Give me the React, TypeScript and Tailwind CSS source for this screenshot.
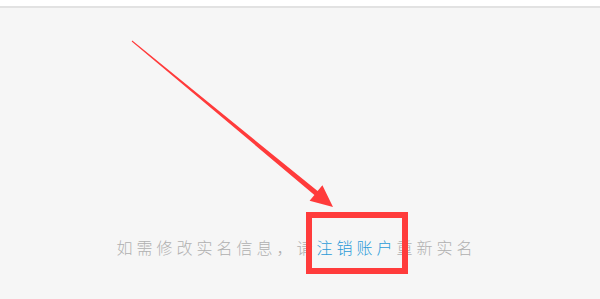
import React from "react";

export default function App() {
  return (
    <div className="relative w-[600px] h-[299px] overflow-hidden bg-[#f6f6f6]" style={{ fontFamily: '"Noto Sans CJK SC", "Noto Sans", sans-serif' }}>
      <div className="h-[8px] bg-white border-b-2 border-[#e2e2e2]" />
      <div className="flex justify-center pt-[229px] pr-[7px]">
        <p className="text-[16px] leading-[20px] tracking-[4px] text-[#b0b0b0] font-light">
          如需修改实名信息，请
          <span className="relative text-[#2b9bd8]">
            注销账户
            <span className="absolute left-[-10px] top-[-23px] w-[102px] h-[62px] border-[6px] border-[#ff3b3b]" />
          </span>
          重新实名
        </p>
      </div>
      <svg className="absolute left-0 top-0" width="600" height="299" viewBox="0 0 600 299">
        <polygon
          points="132.3,40.6 317.6,191.1 322.4,185.3 333,207 309.6,200.7 314.4,194.9 131.7,41.4"
          fill="#ff3b3b"
        />
      </svg>
    </div>
  );
}
